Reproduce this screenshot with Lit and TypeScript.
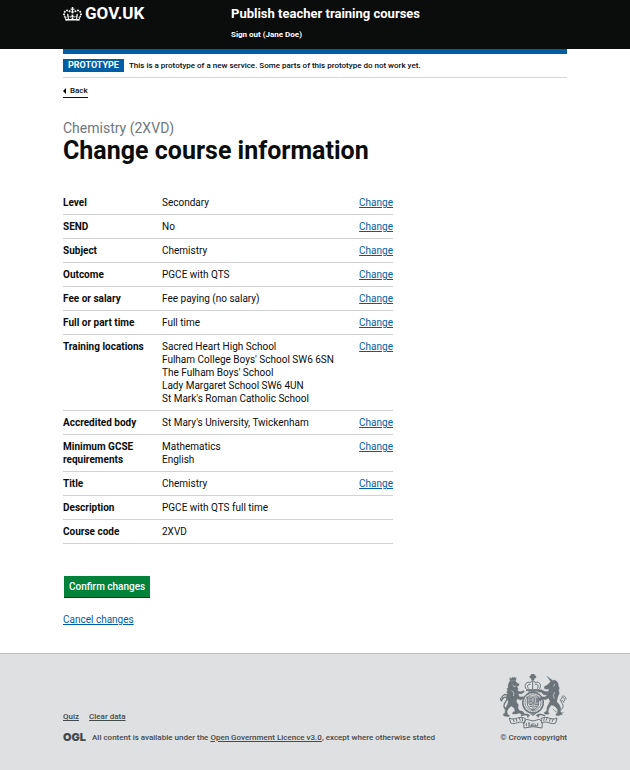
import { LitElement, html, svg, css, nothing } from "lit";
import { customElement } from "lit/decorators.js";

interface Row {
  key: string;
  value: string[];
  fixed?: boolean;
}

const ROWS: Row[] = [
  { key: "Level", value: ["Secondary"] },
  { key: "SEND", value: ["No"] },
  { key: "Subject", value: ["Chemistry"] },
  { key: "Outcome", value: ["PGCE with QTS"] },
  { key: "Fee or salary", value: ["Fee paying (no salary)"] },
  { key: "Full or part time", value: ["Full time"] },
  {
    key: "Training locations",
    value: [
      "Sacred Heart High School",
      "Fulham College Boys' School SW6 6SN",
      "The Fulham Boys' School",
      "Lady Margaret School SW6 4UN",
      "St Mark's Roman Catholic School",
    ],
  },
  { key: "Accredited body", value: ["St Mary's University, Twickenham"] },
  { key: "Minimum GCSE requirements", value: ["Mathematics", "English"] },
  { key: "Title", value: ["Chemistry"] },
  { key: "Description", value: ["PGCE with QTS full time"], fixed: true },
  { key: "Course code", value: ["2XVD"], fixed: true },
];

const crown = html`<svg class="crown" viewBox="0 0 132 97" aria-hidden="true">
  <path
    fill="currentColor"
    fill-rule="evenodd"
    d="M25 30.2c3.5 1.5 7.7-.2 9.1-3.7 1.5-3.6-.2-7.8-3.9-9.2-3.6-1.4-7.6.3-9.1 3.9-1.4 3.5.3 7.5 3.9 9zM9 39.5c3.6 1.5 7.8-.2 9.2-3.7 1.5-3.6-.2-7.8-3.9-9.1-3.6-1.5-7.6.2-9.1 3.8-1.4 3.5.3 7.5 3.8 9zM4.4 57.2c3.5 1.5 7.7-.2 9.1-3.8 1.5-3.6-.2-7.7-3.9-9.1-3.5-1.5-7.6.3-9.1 3.8-1.4 3.5.3 7.6 3.9 9.1zm38.3-21.4c3.5 1.5 7.7-.2 9.1-3.8 1.5-3.6-.2-7.7-3.9-9.1-3.6-1.5-7.6.3-9.1 3.8-1.3 3.6.4 7.7 3.9 9.1zm64.4-5.6c-3.6 1.5-7.8-.2-9.1-3.7-1.5-3.6.2-7.8 3.8-9.2 3.6-1.4 7.7.3 9.2 3.9 1.3 3.5-.4 7.5-3.9 9zm15.9 9.3c-3.6 1.5-7.7-.2-9.1-3.7-1.5-3.6.2-7.8 3.7-9.1 3.6-1.5 7.7.2 9.2 3.8 1.5 3.5-.3 7.5-3.8 9zm4.7 17.7c-3.6 1.5-7.8-.2-9.2-3.8-1.5-3.6.2-7.7 3.9-9.1 3.6-1.5 7.7.3 9.2 3.8 1.3 3.5-.4 7.6-3.9 9.1zM89.3 35.8c-3.6 1.5-7.8-.2-9.2-3.8-1.4-3.6.2-7.7 3.9-9.1 3.6-1.5 7.7.3 9.2 3.8 1.4 3.6-.3 7.7-3.9 9.1zM69.7 17.7l8.9 4.7V9.3l-8.9 2.8c-.2-.3-.5-.6-.9-.9L72.4 0H59.6l3.5 11.2c-.3.3-.6.5-.9.9l-8.8-2.8v13.1l8.8-4.7c.3.3.6.7.9.9l-5 15.4v.1c-.2.8-.4 1.6-.4 2.4 0 4.1 3.1 7.5 7 8.1h.2c.3 0 .7.1 1 .1.4 0 .7 0 1-.1h.2c4-.6 7.1-4.1 7.1-8.1 0-.8-.1-1.7-.4-2.4V34l-5.1-15.4c.4-.2.7-.6 1-.9zM66 92.8c16.9 0 32.8 1.1 47.1 3.2 4-16.9 8.9-26.7 14-33.5l-9.6-3.4c1 4.9 1.1 7.2 0 10.2-1.5-1.4-3-4.3-4.2-8.7L108.6 76c2.8-2 5-3.2 7.5-3.3-4.4 9.4-10 11.9-13.6 11.2-4.3-.8-6.3-4.6-5.6-7.9 1-4.7 5.7-5.9 8-.5 4.3-8.7-3-11.4-7.6-8.8 7.1-7.2 7.9-13.5 2.1-21.1-8 6.1-8.1 12.3-4.5 20.8-4.7-5.4-12.1-2.5-9.5 6.2 3.4-5.2 7.9-2 7.2 3.1-.6 4.3-6.4 7.8-13.5 7.2-10.3-.9-10.9-8-11.2-13.8 2.5-.5 7.1 1.8 11 7.3L80.2 60c-4.1 4.4-8 5.3-12.3 5.4 1.4-4.4 8-11.6 8-11.6H55.5s6.4 7.2 7.9 11.6c-4.2-.1-8-1-12.3-5.4l1.4 16.4c3.9-5.5 8.5-7.7 10.9-7.3-.3 5.8-.9 12.8-11.1 13.8-7.2.6-12.9-2.9-13.5-7.2-.7-5 3.8-8.3 7.1-3.1 2.7-8.7-4.6-11.6-9.4-6.2 3.7-8.5 3.6-14.7-4.6-20.8-5.8 7.6-5 13.9 2.2 21.1-4.7-2.6-11.9.1-7.7 8.8 2.3-5.5 7.1-4.2 8.1.5.7 3.3-1.3 7.1-5.7 7.9-3.5.7-9-1.8-13.5-11.2 2.5.1 4.7 1.3 7.5 3.3l-4.7-15.4c-1.2 4.4-2.7 7.2-4.3 8.7-1.1-3-.9-5.3 0-10.2l-9.5 3.4c5 6.9 9.9 16.7 14 33.5 14.8-2.1 30.8-3.2 47.7-3.2z"
  />
</svg>`;

/* Crowned arches above a shield ringed by the garter. */
const shield = svg`
  <path d="M122 27h7v6h5v5h-5v6h-7v-6h-5v-5h5z" fill="currentColor" />
  <path d="M107 74c-10-12-2-24 8-22 5 1 8-3 10-8 3 5 5 9 11 8 11-2 17 10 8 22z" />
  <path d="M112 71c-5-9-1-15 7-13M125 48v24M139 71c5-9 1-15-7-13M105 77h41" />
  <circle cx="126" cy="113" r="31" stroke-width="4" />
  <circle cx="126" cy="113" r="24" stroke-width="2" />
  <circle cx="126" cy="113" r="28" stroke-width="3" stroke-dasharray="2 3" />
  <path d="M109 96h34v19c0 11-7 16-17 20-10-4-17-9-17-20z" />
  <path d="M126 96v39M109 114h34M112 101h11M112 105h11M112 109h11M114 119h9M116 124h7" />
  <path d="M131 99v13M136 99v13M140 99v13M130 119h11M130 124h8M130 129h3" />
  <path d="M116 78h20M111 81h30M118 145l8 6 9-6M126 140v11" />
`;

/* Lion to the left with its small crown, tail and raised paw. */
const lion = svg`
  <g fill="currentColor" stroke-width="1">
    <path d="M57 47l-1-9 5 3 3-5 3 4 3-5 2 5 4-2-2 9z" />
    <path d="M56 49l17-1 5 6 7 3-3 6-5 2 4 5-1 8 8 2 10-3 2 4-8 5-11 1 5 9 11-1 2 5-10 5-11-4-2 10 6 8-1 11 5 7 9 2 6 8-8 2-8-5-9 3h-12l2-6 6-2-2-9-9-7-8 7-5 8 1 9 7 5-3 3-14-2-3-5 6-4 1-14 6-10 3-10-4-10-2-9 4-5-3-4 3-5-2-6 4-4-1-6z" />
  </g>
  <path d="M50 134c-14-2-13-17-6-24 7-8 3-15-4-13-6 2-8 8-9 12M32 99c2-8 10-13 15-9M31 108l-3-9" stroke-width="4" />
  <path d="M65 59l4 6 6-2M62 76l7 8-2 9" stroke="#dee0e2" stroke-width="2" />
`;

/* Unicorn to the right with horn, mane and chain. */
const unicorn = svg`
  <path d="M180 51L168 34l16 12z" fill="currentColor" stroke-width="1" />
  <g fill="currentColor" stroke-width="1">
    <path d="M180 49l9-4 7 3 5 6 1 9 3 6-2 7 2 9-5 12-3 13 7 8 5 10-1 11 5 7-6 5-10 1-3-5 7-3-2-13-10-9-8-2-7 9-3 12 4 6-13 1-3-5 8-5 1-11 5-10 4-8-4-9-10 4-8-2-8 6-5-4 8-9 12 1 7-6-11-1-7-7-9-1-1-6 11-1 8 5 12 1 2-9-8 2-7-3 2-6 7-3z" />
  </g>
  <path d="M204 136c14-2 15-15 8-23-7-9 0-18 6-14 5 3 4 8 1 10M212 95c7-5 13 1 13 8M211 109c5-5 8 1 7 5" stroke-width="3" />
  <path d="M191 57l-3 8M191 81l-4 10 3 10" stroke="#dee0e2" stroke-width="2" />
  <path d="M187 133c7 9 22 15 31 9M205 145l11 5" stroke-width="3" stroke-dasharray="4 2" />
`;

/* Motto ribbon folded in five parts. */
const ribbon = svg`
  <path d="M55 159c18 10 30-10 48 2l-2 13c-16-9-28 7-42 0zM198 159c-18 10-30-10-48 2l2 13c16-9 28 7 42 0z" />
  <path d="M66 162l4 9M75 161l3 9M84 157l4 10M93 158l2 10M187 162l-4 9M178 161l-3 9M169 157l-4 10M160 158l-2 10" />
  <path d="M98 172l9-9 19 5 19-5 9 9-1 17-27-4-27 4z" />
  <path d="M106 174v9M111 174h6M114 174v9M121 176v7M126 174v9M131 176l4 7M140 174v9M112 183h28" />
  <path d="M90 153c9-6 17-6 26-1M136 152c9-5 17-5 26 1M107 147l5 10M146 147l-6 10" stroke-width="4" />
`;

const arms = html`<svg class="arms" viewBox="27 27 201 168" aria-hidden="true">
  <g fill="none" stroke="currentColor" stroke-width="3" stroke-linejoin="round">
    ${lion} ${unicorn} ${shield} ${ribbon}
  </g>
</svg>`;

@customElement("app-root")
export class AppRoot extends LitElement {
  static styles = css`
    :host {
      display: flex;
      flex-direction: column;
      min-height: 100vh;
      background: #fff;
      color: #0b0c0c;
      font: 10px/13px Roboto, "Liberation Sans", sans-serif;
    }
    * {
      box-sizing: border-box;
    }
    a {
      color: #005ea5;
      text-underline-offset: 1px;
    }
    .width {
      margin: 0 10%;
    }
    .header {
      background: #0b0c0c;
      color: #fff;
    }
    .header .width {
      display: grid;
      grid-template-columns: 1fr 2fr;
      padding: 5px 0 8px;
    }
    .header a {
      color: #fff;
      text-decoration: none;
      font-weight: 700;
    }
    .logo {
      display: flex;
      align-items: center;
      gap: 3px;
      height: 17px;
      font-size: 17px;
    }
    .crown {
      width: 19px;
      height: 14px;
    }
    .service {
      display: flex;
      flex-direction: column;
      align-items: flex-start;
      gap: 7px;
    }
    .header .name {
      font-size: 13px;
      line-height: 17px;
    }
    .header .sign-out {
      font-size: 8px;
      line-height: 12px;
    }
    .banner {
      display: flex;
      align-items: center;
      gap: 5px;
      padding: 5px 0;
      border-top: 5px solid #005ea5;
      border-bottom: 1px solid #d5d7d9;
      font-size: 8px;
      font-weight: 500;
    }
    .tag {
      padding: 0 5px;
      background: #005ea5;
      color: #fff;
      font-size: 9px;
      font-weight: 700;
    }
    .back {
      display: inline-flex;
      align-items: center;
      gap: 4px;
      margin-top: 7px;
      border-bottom: 1px solid #0b0c0c;
      color: #0b0c0c;
      font-size: 8px;
      font-weight: 500;
      line-height: 12px;
      text-decoration: none;
    }
    .arrow {
      width: 3px;
      height: 6px;
    }
    .main {
      flex: 1;
      display: flex;
      flex-direction: column;
      align-items: flex-start;
      padding-bottom: 27px;
    }
    h1 {
      display: flex;
      flex-direction: column;
      margin: 21px 0 26px;
      font-size: 25px;
      line-height: 28px;
    }
    .caption {
      color: #6f777b;
      font-size: 14px;
      font-weight: 400;
      line-height: 18px;
    }
    .summary {
      width: 66%;
      max-width: 330px;
      margin: 0 0 32px;
    }
    .row {
      display: grid;
      grid-template-columns: minmax(0, 3fr) minmax(0, 5fr) minmax(0, 2fr);
      padding: 5px 0;
      border-bottom: 1px solid #d0d2d4;
    }
    dt {
      font-weight: 700;
      padding-right: 8px;
    }
    dd {
      margin: 0;
    }
    .value {
      white-space: nowrap;
    }
    .action {
      text-align: right;
    }
    .confirm {
      margin: 0 0 15px 1px;
      padding: 4px 5px;
      border: 0;
      border-bottom: 1px solid #003618;
      background: #00823b;
      color: #fff;
      font: inherit;
      font-weight: 500;
    }
    .footer {
      border-top: 1px solid #bfc1c3;
      background: #dee0e2;
      color: #454a4d;
      font-size: 8px;
      font-weight: 500;
    }
    .footer a {
      color: #454a4d;
    }
    .footer .width {
      display: flex;
      justify-content: space-between;
      align-items: flex-end;
      padding: 20px 0 26px;
    }
    .links {
      display: flex;
      gap: 10px;
      margin-bottom: 8px;
    }
    .licence {
      display: flex;
      align-items: center;
      gap: 6px;
    }
    .ogl {
      font: 900 11px/13px Inter, Roboto, sans-serif;
    }
    .crest {
      display: flex;
      flex-direction: column;
      align-items: flex-end;
      gap: 1px;
    }
    .arms {
      width: 67px;
      height: 56px;
      color: #6b7478;
    }
  `;

  render() {
    return html`
      <header class="header">
        <div class="width">
          <a class="logo" href="#">${crown}<span>GOV.UK</span></a>
          <div class="service">
            <a class="name" href="#">Publish teacher training courses</a>
            <a class="sign-out" href="#">Sign out (Jane Doe)</a>
          </div>
        </div>
      </header>
      <div class="width banner">
        <strong class="tag">PROTOTYPE</strong>
        <span>This is a prototype of a new service. Some parts of this prototype do not work yet.</span>
      </div>
      <main class="width main">
        <a class="back" href="#">
          <svg class="arrow" viewBox="0 0 3 6" aria-hidden="true"><path d="M3 0v6L0 3z" /></svg>
          Back
        </a>
        <h1><span class="caption">Chemistry (2XVD)</span>Change course information</h1>
        <dl class="summary">
          ${ROWS.map(
            (row) => html`<div class="row">
              <dt>${row.key}</dt>
              <dd class="value">${row.value.map((line) => html`<div>${line}</div>`)}</dd>
              ${row.fixed
                ? nothing
                : html`<dd class="action"><a href="#" aria-label="Change ${row.key}">Change</a></dd>`}
            </div>`
          )}
        </dl>
        <button class="confirm" type="button">Confirm changes</button>
        <a href="#">Cancel changes</a>
      </main>
      <footer class="footer">
        <div class="width">
          <div>
            <nav class="links"><a href="#">Quiz</a><a href="#">Clear data</a></nav>
            <div class="licence">
              <span class="ogl">OGL</span>
              <span>All content is available under the <a href="#">Open Government Licence v3.0</a>, except where otherwise stated</span>
            </div>
          </div>
          <div class="crest">${arms}<span>© Crown copyright</span></div>
        </div>
      </footer>
    `;
  }
}
